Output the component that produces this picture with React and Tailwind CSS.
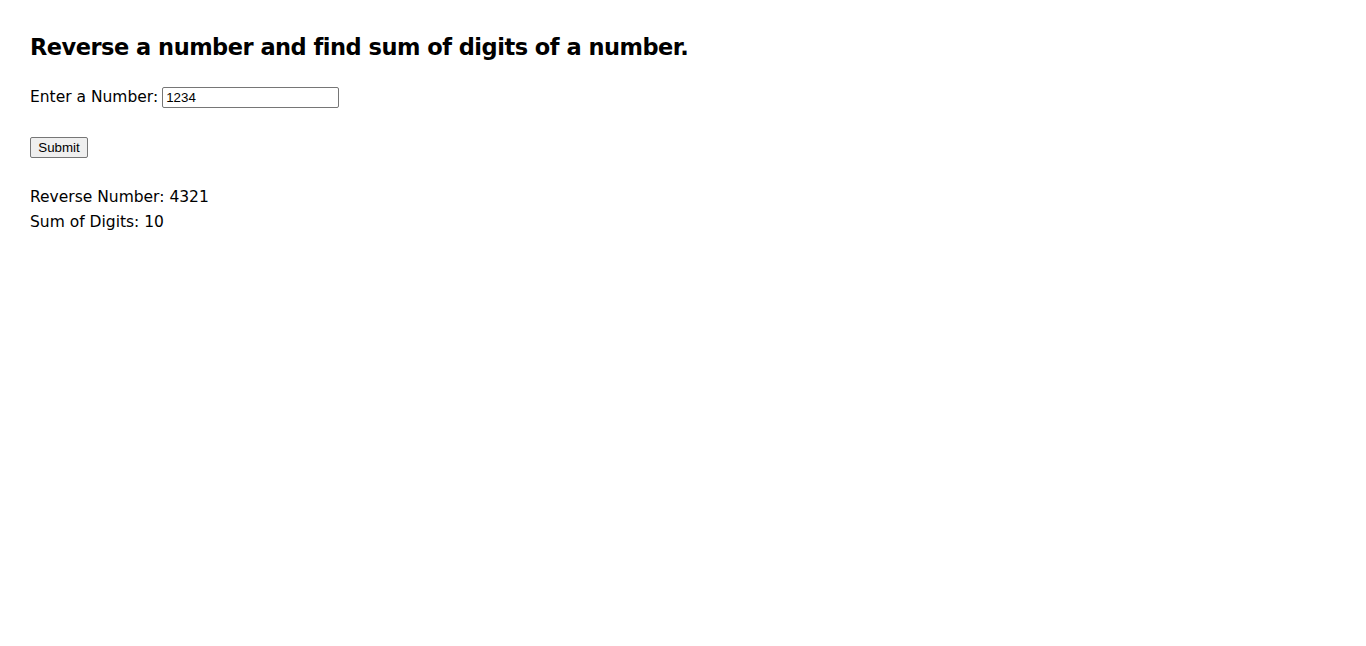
import React, { useState } from 'react';

const App = () => {
  const [num, setNum] = useState('1234');
  const [result, setResult] = useState({ reverse: '4321', sum: 10 });

  const handleSubmit = (e) => {
    e.preventDefault();
    const digits = num.replace(/\D/g, '');
    const reverse = digits.split('').reverse().join('');
    const sum = digits.split('').reduce((a, d) => a + Number(d), 0);
    setResult({ reverse, sum });
  };

  return (
    <div className="min-h-screen bg-white px-[30px] pt-[29px] text-black font-['DejaVu_Sans',sans-serif]">
      <h1 className="text-[22.5px] leading-[36px] tracking-[-0.5px] font-bold">
        Reverse a number and find sum of digits of a number.
      </h1>

      <form onSubmit={handleSubmit} className="mt-[20px]">
        <div className="flex items-center h-[24px] text-[15.5px]">
          <label htmlFor="num" className="mr-[4px] pt-[2px]">Enter a Number:</label>
          <input
            id="num"
            type="text"
            value={num}
            onChange={(e) => setNum(e.target.value)}
            className="w-[177px] h-[21px] border border-[#767676] rounded-[2px] px-[3px] text-[13.33px] font-['Liberation_Sans',Arial,sans-serif] outline-none"
          />
        </div>

        <button
          type="submit"
          className="mt-[28px] w-[58px] h-[21px] bg-[#efefef] border border-[#767676] rounded-[2px] text-[13.33px] leading-none font-['Liberation_Sans',Arial,sans-serif]"
        >
          Submit
        </button>
      </form>

      <div className="mt-[26px] text-[15.5px] leading-[25px]">
        <p>Reverse Number: {result.reverse}</p>
        <p>Sum of Digits: {result.sum}</p>
      </div>
    </div>
  );
};

export default App;
